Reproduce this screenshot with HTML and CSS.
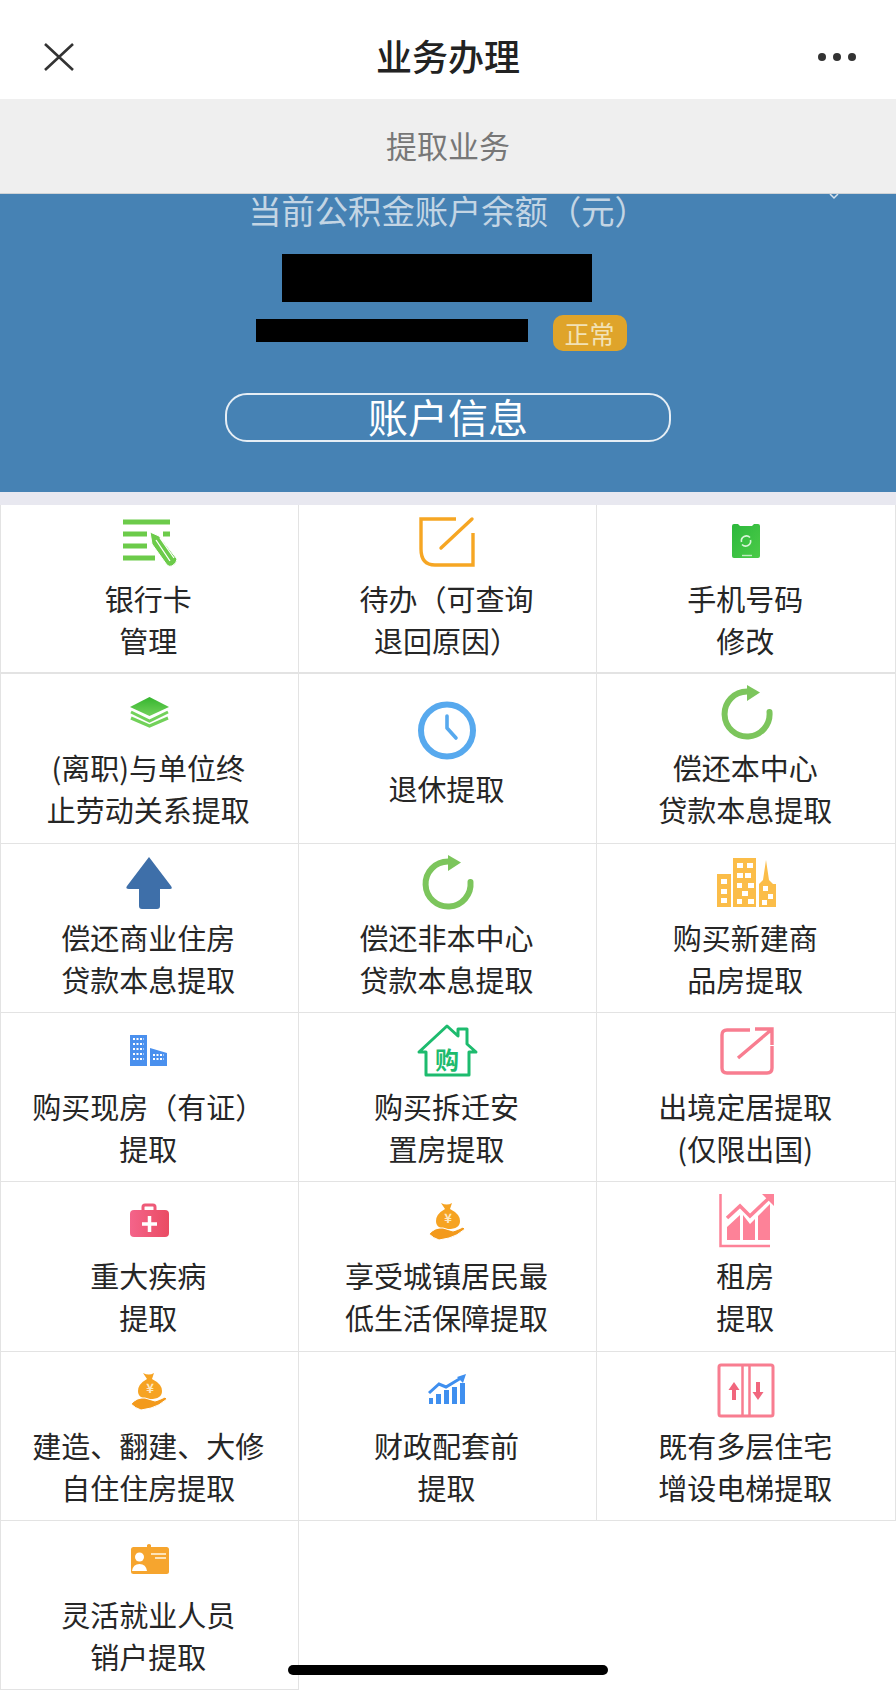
FILE: index.html
```html
<!DOCTYPE html>
<html lang="zh-CN">
<head>
  <meta charset="UTF-8" />
  <title>业务办理</title>
  <link rel="stylesheet" href="styles.css">
</head>
<body>
  <svg class="defs" width="0" height="0">
    <defs>
      <symbol id="i-rotate" viewBox="0 0 64 74">
        <path d="M55.500 38A22.500 22.500 0 1 1 33 17.500" fill="none" stroke="#7cc55c" stroke-width="6" stroke-linecap="round" />
        <path d="M33 11L46 18.500L33 27Z" fill="#7cc55c" />
      </symbol>
      <symbol id="i-money" viewBox="0 0 64 74">
        <path d="M26 21Q32 24 37 21L35 27Q45 32 45 39Q45 47 33 47Q21 47 21 39Q21 32 30 27Z" fill="#f6a322" />
        <path d="M14 52Q20 45 28 46L38 49Q42 48 48 45L50 47Q42 54 34 56L24 58Q18 56 14 52Z" fill="#f39a1c" stroke="#fff" stroke-width="1" />
        <text x="33" y="41" class="yen">¥</text>
      </symbol>
    </defs>
  </svg>

  <header class="topbar">
    <svg class="close" width="30" height="28" viewBox="0 0 30 28">
      <path d="M1 1L29 27M29 1L1 27" fill="none" stroke="#333" stroke-width="2.600" />
    </svg>
    <h1 class="topbar-title">业务办理</h1>
    <div class="more"><span></span><span></span><span></span></div>
  </header>

  <div class="subbar">提取业务</div>

  <section class="account">
    <svg class="chevron" width="12" height="6" viewBox="0 0 12 6">
      <path d="M2 0L6 4L10 0" fill="none" stroke="#d5e2ee" stroke-width="1.500" />
    </svg>
    <div class="account-label">当前公积金账户余额（元）</div>
    <div class="mask-amount"></div>
    <div class="account-row">
      <div class="mask-number"></div>
      <span class="badge">正常</span>
    </div>
    <div class="account-btn">账户信息</div>
  </section>

  <div class="strip"></div>

  <div class="grid">
    <div class="cell cell-first">
      <svg class="icon" viewBox="0 0 64 74">
        <path d="M6 17H53M6 29H30M46 29H53M6 41H30M6 53H38" stroke="#6ccb4a" stroke-width="5" fill="none" />
        <path d="M33 27L42 31L60 54Q60 58 55 61Q52 62 50 60L35 39Z" fill="#6ccb4a" stroke="#fff" stroke-width="1" />
        <path d="M39 35L53 56M43 33L57 53" stroke="#fff" stroke-width="1.300" fill="none" />
      </svg>
      <div class="label">银行卡<br>管理</div>
    </div>
    <div class="cell cell-first">
      <svg class="icon" viewBox="0 0 64 74">
        <path d="M41 14H6V44Q6 60 20 60H58V28" fill="none" stroke="#f6a623" stroke-width="3.400" />
        <path d="M57 14L26 43" fill="none" stroke="#f6a623" stroke-width="3.400" stroke-linecap="round" />
      </svg>
      <div class="label">待办（可查询<br>退回原因）</div>
    </div>
    <div class="cell cell-first">
      <svg class="icon" viewBox="0 0 64 74">
        <defs>
          <linearGradient id="g-phone" x1="0" y1="0" x2="1" y2="1">
            <stop offset="0" stop-color="#2cb83c" />
            <stop offset="1" stop-color="#4ccb48" />
          </linearGradient>
        </defs>
        <path d="M20 19H24L26 21H38L40 19H44Q46 19 46 21V51Q46 53 44 53H20Q18 53 18 51V21Q18 19 20 19Z" fill="url(#g-phone)" />
        <path d="M27.500 37A5 5 0 0 1 36 32.500M36.500 35A5 5 0 0 1 28 39.500" fill="none" stroke="#d8f5d8" stroke-width="1.600" />
        <path d="M28 50.500H38" stroke="#c0ecc0" stroke-width="1.400" />
      </svg>
      <div class="label">手机号码<br>修改</div>
    </div>

    <div class="cell">
      <svg class="icon" viewBox="0 0 64 74">
        <defs>
          <linearGradient id="g-layer" x1="0" y1="0" x2="0" y2="1">
            <stop offset="0" stop-color="#35b52f" />
            <stop offset="1" stop-color="#72d15a" />
          </linearGradient>
        </defs>
        <path d="M32.500 23L52 33L32.500 42L13 33Z" fill="url(#g-layer)" />
        <path d="M14 38L32.500 47L51 38M14 44L32.500 52L51 44" fill="none" stroke="#72d15a" stroke-width="3" />
      </svg>
      <div class="label">(离职)与单位终<br>止劳动关系提取</div>
    </div>
    <div class="cell">
      <svg class="icon" viewBox="0 0 64 74">
        <circle cx="32" cy="35.500" r="26" fill="#fff" stroke="#57a9ee" stroke-width="6" />
        <path d="M32 21V33L41 43" fill="none" stroke="#57a9ee" stroke-width="3.600" stroke-linecap="round" stroke-linejoin="round" />
      </svg>
      <div class="label">退休提取</div>
    </div>
    <div class="cell">
      <svg class="icon"><use href="#i-rotate" /></svg>
      <div class="label">偿还本中心<br>贷款本息提取</div>
    </div>

    <div class="cell">
      <svg class="icon" viewBox="0 0 64 74">
        <path d="M32 13L54 42Q56 45 53 45H43V62Q43 65 40 65H25Q22 65 22 62V45H12Q8 45 10 42Z" fill="#3e6fa9" />
      </svg>
      <div class="label">偿还商业住房<br>贷款本息提取</div>
    </div>
    <div class="cell">
      <svg class="icon"><use href="#i-rotate" /></svg>
      <div class="label">偿还非本中心<br>贷款本息提取</div>
    </div>
    <div class="cell">
      <svg class="icon" viewBox="0 0 64 74">
        <path d="M3 30H17V63H3ZM19 14H42V63H19ZM45 40L49 36L52 16L55 36L59 40L62 40V63H45Z" fill="#fbbd49" />
        <path d="M7 35h6v5h-6zM7 45h6v5h-6zM7 54h6v5h-6zM23 19h6v5h-6zM33 19h6v5h-6zM23 29h6v5h-6zM31 29h6v5h-6zM23 39h5v5h-5zM34 39h6v5h-6zM28 47h6v5h-6zM23 55h5v5h-5zM34 55h6v5h-6zM49 42h5v5h-5zM54 50h5v5h-5zM48 56h5v5h-5z" fill="#fff" />
      </svg>
      <div class="label">购买新建商<br>品房提取</div>
    </div>

    <div class="cell">
      <svg class="icon" viewBox="0 0 64 74">
        <path d="M13 22H30V53H13ZM33 35L50 40V53H33Z" fill="#4a90ee" />
        <path d="M16 26h11M16 31h11M16 36h11M16 41h11M16 46h11M36 42h11M36 46h11" stroke="#fff" stroke-width="2" stroke-dasharray="2 1.500" fill="none" />
      </svg>
      <div class="label">购买现房（有证）<br>提取</div>
    </div>
    <div class="cell">
      <svg class="icon" viewBox="0 0 64 74">
        <path d="M4 39L32 13L43 23V16H52V31L61 39H54V62H11V39Z" fill="none" stroke="#1dbb6e" stroke-width="3" stroke-linejoin="round" />
        <text x="32" y="56" class="house-text">购</text>
      </svg>
      <div class="label">购买拆迁安<br>置房提取</div>
    </div>
    <div class="cell">
      <svg class="icon" viewBox="0 0 64 74">
        <path d="M36 17H13Q8 17 8 22V55Q8 60 13 60H53Q58 60 58 55V33" fill="none" stroke="#f87d90" stroke-width="3.400" />
        <path d="M41 16H58V32M57 17L24 45" fill="none" stroke="#f87d90" stroke-width="3.400" />
      </svg>
      <div class="label">出境定居提取<br>(仅限出国)</div>
    </div>

    <div class="cell">
      <svg class="icon" viewBox="0 0 64 74">
        <defs>
          <linearGradient id="g-kit" x1="0" y1="0" x2="1" y2="0">
            <stop offset="0" stop-color="#f4648a" />
            <stop offset="1" stop-color="#ea4b63" />
          </linearGradient>
        </defs>
        <path d="M26 30V25Q26 23 28 23H36Q38 23 38 25V30" fill="none" stroke="#ee5a78" stroke-width="3" />
        <rect x="13" y="28" width="39" height="27" rx="4" fill="url(#g-kit)" />
        <path d="M32.500 34V50M25 42H40" stroke="#fff" stroke-width="3.500" />
      </svg>
      <div class="label">重大疾病<br>提取</div>
    </div>
    <div class="cell">
      <svg class="icon"><use href="#i-money" /></svg>
      <div class="label">享受城镇居民最<br>低生活保障提取</div>
    </div>
    <div class="cell">
      <svg class="icon" viewBox="0 0 64 74">
        <path d="M6.500 12V64H56" fill="none" stroke="#fd8298" stroke-width="2.500" />
        <path d="M13 36L26 24L36 34L54 17" fill="none" stroke="#fd8298" stroke-width="3.500" />
        <path d="M48 12H60V24Z" fill="#fd8298" />
        <path d="M13 45L26 33V58H13ZM29 33L36 42L41 37V58H29ZM44 34L56 22V58H44Z" fill="#fd8298" />
      </svg>
      <div class="label">租房<br>提取</div>
    </div>

    <div class="cell">
      <svg class="icon"><use href="#i-money" /></svg>
      <div class="label">建造、翻建、大修<br>自住住房提取</div>
    </div>
    <div class="cell">
      <svg class="icon" viewBox="0 0 64 74">
        <path d="M14 52V46H18V52ZM21 52V42H26V52ZM29 52V38H34V52ZM37 52V35H42V52ZM45 52V31H50V52Z" fill="#3f8fef" />
        <path d="M14 41L24 32L31 35L46 26" fill="none" stroke="#3f8fef" stroke-width="3" />
        <path d="M42 25L51 22L48 31Z" fill="#3f8fef" />
      </svg>
      <div class="label">财政配套前<br>提取</div>
    </div>
    <div class="cell">
      <svg class="icon" viewBox="0 0 64 74">
        <rect x="5" y="13" width="54" height="51" rx="2" fill="none" stroke="#f87d90" stroke-width="3" />
        <path d="M28.500 13V64M35.500 13V64" stroke="#f87d90" stroke-width="2.500" />
        <path d="M20 30L25.500 38H22V48H18V38H14.500ZM44 48L38.500 40H42V30H46V40H49.500Z" fill="#f1667d" />
      </svg>
      <div class="label">既有多层住宅<br>增设电梯提取</div>
    </div>

    <div class="cell">
      <svg class="icon" viewBox="0 0 64 74">
        <path d="M30 27V24Q32 22 34 24V27Z" fill="#f6a52e" />
        <rect x="14" y="26" width="38" height="27" rx="2.500" fill="#f6a52e" />
        <circle cx="22.500" cy="36" r="4.500" fill="#fff" />
        <path d="M15 50Q16 43 22.500 43Q29 43 30 50Z" fill="#fff" />
        <path d="M34 33H49M38 37H49" stroke="#fde3b8" stroke-width="1.800" />
      </svg>
      <div class="label">灵活就业人员<br>销户提取</div>
    </div>
  </div>

  <div class="home-bar"></div>
</body>
</html>
```

FILE: styles.css
```css
html, body {
  margin: 0;
  padding: 0;
}

body {
  position: relative;
  width: 896px;
  height: 1691px;
  overflow: hidden;
  background: #fff;
  font-family: "Noto Sans CJK SC", "Noto Sans", sans-serif;
}

.defs {
  position: absolute;
}

.topbar {
  box-sizing: border-box;
  height: 99px;
  padding: 11px 40px 0;
  display: grid;
  grid-template-columns: 1fr auto 1fr;
  align-items: center;
}

.close {
  margin: 4px 0 0 4px;
}

.topbar-title {
  margin: 0;
  font-size: 36px;
  font-weight: 500;
  color: #222;
}

.more {
  display: flex;
  justify-content: flex-end;
  gap: 7px;
  margin-top: 4px;
}

.more span {
  width: 8px;
  height: 8px;
  border-radius: 50%;
  background: #333;
}

.subbar {
  box-sizing: border-box;
  height: 95px;
  line-height: 91px;
  text-align: center;
  font-size: 31px;
  color: #777;
  background: #efefef;
  border-bottom: 1px solid #cfd3d6;
}

.account {
  position: relative;
  box-sizing: border-box;
  height: 298px;
  display: flex;
  flex-direction: column;
  align-items: center;
  background: #4682b4;
}

.chevron {
  position: absolute;
  top: 0;
  right: 56px;
}

.account-label {
  height: 36px;
  line-height: 32px;
  font-size: 33.3px;
  color: #c3d5e4;
}

.mask-amount {
  width: 310px;
  height: 48px;
  margin: 24px 22px 0 0;
  background: #000;
}

.account-row {
  display: flex;
  align-items: center;
  gap: 25px;
  margin-top: 13px;
  padding-right: 14px;
}

.mask-number {
  width: 272px;
  height: 23px;
  margin-bottom: 5px;
  background: #000;
}

.badge {
  width: 74px;
  height: 36px;
  line-height: 36px;
  text-align: center;
  font-size: 25px;
  color: #f2e2b6;
  background: #dfa42a;
  border-radius: 10px;
}

.account-btn {
  box-sizing: border-box;
  width: 446px;
  height: 49px;
  margin-top: 42px;
  line-height: 43px;
  text-align: center;
  font-size: 40px;
  color: #fff;
  border: 2px solid #e6eef5;
  border-radius: 22px;
}

.strip {
  height: 13px;
  background: #e8e8f0;
}

.grid {
  display: grid;
  grid-template-columns: repeat(3, 1fr);
  grid-auto-rows: 169.33px;
}

.cell {
  box-sizing: border-box;
  padding-bottom: 10px;
  display: flex;
  flex-direction: column;
  align-items: center;
  justify-content: center;
  border-right: 1px solid #e3e3e3;
  border-bottom: 1px solid #e3e3e3;
}

.cell:nth-child(3n+1) {
  border-left: 1px solid #e3e3e3;
}

.cell-first {
  border-bottom-width: 2px;
}

.icon {
  display: block;
  flex: none;
  width: 64px;
  height: 74px;
}

.label {
  margin: -2px 0 2px;
  padding-right: 2px;
  font-size: 29px;
  line-height: 42px;
  text-align: center;
  color: #262626;
  white-space: nowrap;
}

.yen {
  font-size: 13px;
  font-weight: 700;
  text-anchor: middle;
  fill: #fde9c4;
}

.house-text {
  font-size: 24px;
  font-weight: 700;
  text-anchor: middle;
  fill: #1dbb6e;
}

.home-bar {
  position: absolute;
  left: 288px;
  top: 1665px;
  width: 320px;
  height: 10px;
  border-radius: 5px;
  background: #000;
}
```
